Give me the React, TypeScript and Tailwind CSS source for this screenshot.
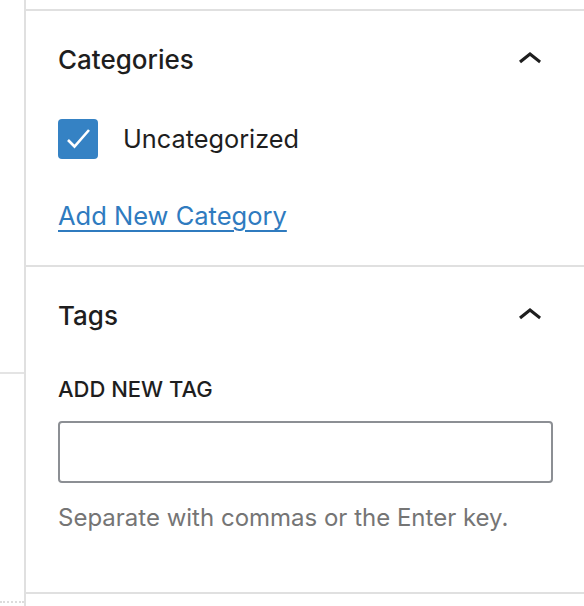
import React from "react";

const ChevronUp = () => (
  <svg width="48" height="48" viewBox="0 0 24 24" className="fill-[#1e1e1e]">
    <path d="M6.5 12.4L12 8l5.5 4.4-.9 1.2L12 10l-4.5 3.6-1-1.2z" />
  </svg>
);

const App = () => {
  return (
    <div className="flex w-[584px] h-[606px] bg-white overflow-hidden font-['Inter','Liberation_Sans',sans-serif] text-[#1e1e1e]">
      {/* left strip */}
      <div className="w-[24px] flex flex-col">
        <div className="h-[374px] border-b-2 border-[#e4e4e4]" />
        <div className="h-[229px] border-b-2 border-dotted border-[#dcdcdc]" />
      </div>
      <div className="w-[2px] bg-[#e0e0e0]" />

      <div className="flex-1 flex flex-col pt-[9px]">
        {/* Categories */}
        <section className="border-t-2 border-b-2 border-[#e0e0e0] pl-[32px] pr-[30px] pb-[33px]">
          <div className="h-[98px] flex items-center justify-between">
            <h2 className="text-[26px] font-medium leading-none">Categories</h2>
            <ChevronUp />
          </div>
          <label className="mt-[10px] flex items-center gap-[25px]">
            <span className="w-[40px] h-[40px] rounded-[4px] bg-[#3582c4] flex items-center justify-center">
              <svg width="26" height="26" viewBox="0 0 26 26" fill="none">
                <path d="M3 14l6.5 6.5L24 4" stroke="white" strokeWidth="2.6" />
              </svg>
            </span>
            <span className="text-[25.3px]">Uncategorized</span>
          </label>
          <a className="mt-[41px] block w-fit text-[25.5px] leading-[32px] text-[#2f7bbf] underline underline-offset-[5px] decoration-2">
            Add New Category
          </a>
        </section>

        {/* Tags */}
        <section className="border-b-2 border-[#e0e0e0] pl-[32px] pr-[30px] pb-[59px]">
          <div className="h-[98px] flex items-center justify-between">
            <h2 className="text-[26px] font-medium leading-none">Tags</h2>
            <ChevronUp />
          </div>
          <div className="mt-[10px] text-[22px] leading-[28px] font-medium uppercase">Add New Tag</div>
          <input
            type="text"
            className="mt-[18px] block w-[495px] h-[62px] rounded-[4px] border-2 border-[#8c8f94] bg-white"
          />
          <p className="mt-[20px] text-[24px] leading-[30px] text-[#757575]">
            Separate with commas or the Enter key.
          </p>
        </section>
      </div>
    </div>
  );
};

export default App;
